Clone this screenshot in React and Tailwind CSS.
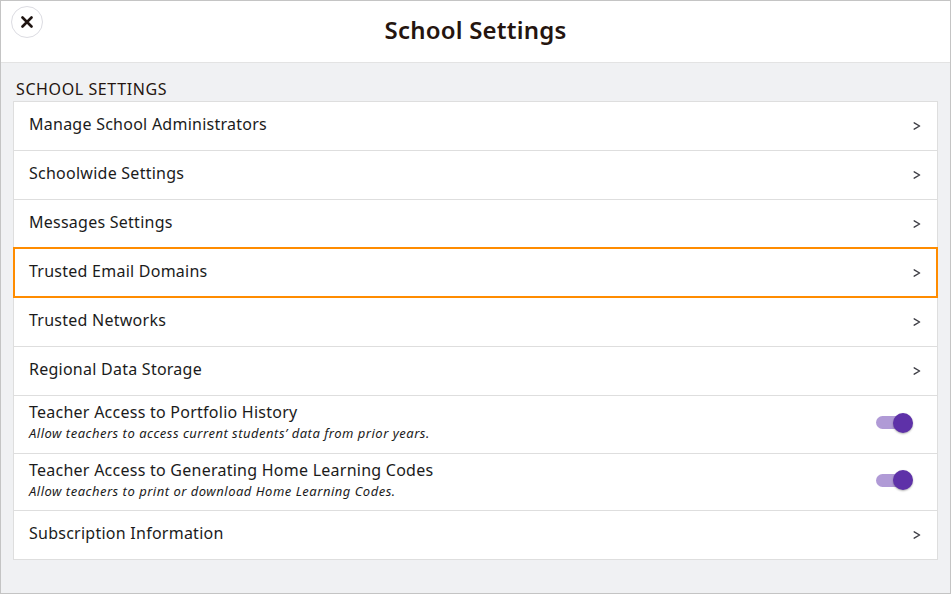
const rows = [
  { label: 'Manage School Administrators', h: 'h-[48px]' },
  { label: 'Schoolwide Settings' },
  { label: 'Messages Settings' },
  { label: 'Trusted Email Domains', active: true },
  { label: 'Trusted Networks' },
  { label: 'Regional Data Storage' },
  { label: 'Teacher Access to Portfolio History', sub: 'Allow teachers to access current students’ data from prior years.', toggle: true, h: 'h-[58px]' },
  { label: 'Teacher Access to Generating Home Learning Codes', sub: 'Allow teachers to print or download Home Learning Codes.', toggle: true, h: 'h-[57px]' },
  { label: 'Subscription Information' },
];

function Toggle() {
  return (
    <div className="relative w-[37px] h-[20px] mr-[8px] -mt-[4px] flex items-center">
      <div className="w-[31px] h-[13px] rounded-full bg-[#b09ad6]" />
      <div className="absolute right-0 w-[20px] h-[20px] rounded-full bg-[#5e31a8] shadow-[0_1px_2px_rgba(0,0,0,0.3)]" />
    </div>
  );
}

function Chevron() {
  return (
    <svg width="8" height="8" viewBox="0 0 8 8" className="text-[#3f3f46]">
      <path d="M1.2 0.8 L6.6 4 L1.2 7.2" fill="none" stroke="currentColor" strokeWidth="1.4" strokeLinecap="round" strokeLinejoin="round" />
    </svg>
  );
}

export default function App() {
  return (
    <div className="w-[951px] h-[594px] border border-[#c4c4c4] bg-[#f0f1f3] flex flex-col text-[#1b1b1b]" style={{ fontFamily: '"Noto Sans", "Open Sans", sans-serif' }}>
      <div className="relative h-[62px] bg-white border-b border-[#e3e3e3] flex items-center justify-center shrink-0">
        <button className="absolute left-[10px] top-[5px] w-[32px] h-[32px] rounded-full border border-[#dcdce2] bg-white flex items-center justify-center text-[#1f1512]">
          <svg width="12" height="12" viewBox="0 0 12 12">
            <path d="M1.5 1.5 L10.5 10.5 M10.5 1.5 L1.5 10.5" stroke="currentColor" strokeWidth="2.6" strokeLinecap="round" />
          </svg>
        </button>
        <h1 className="text-[24px] font-semibold text-[#25150f] tracking-[0.2px] -mt-[3px]">School Settings</h1>
      </div>

      <div className="px-[12px] pt-[15px]">
        <div className="pl-[3px] text-[16px] leading-[22px] text-[#25150f] tracking-[0.6px]">SCHOOL SETTINGS</div>
        <div className="bg-white border border-[#dedede] mt-[1px]">
          {rows.map((r, i) => (
            <div
              key={r.label}
              className={`flex items-center justify-between pl-[15px] pr-[16px] ${i > 0 ? 'border-t border-[#dedede]' : ''} ${r.h || 'h-[49px]'} ${r.active ? 'outline-2 outline-[#ff8c00] -outline-offset-1 relative' : ''}`}
            >
              <div className={`flex flex-col ${r.sub ? '-mt-[6px]' : '-mt-[5px]'}`}>
                <span className="text-[16px] leading-[20px] tracking-[0.25px]">{r.label}</span>
                {r.sub && <span className="text-[13px] leading-[16px] italic mt-[3px] tracking-[0.5px]">{r.sub}</span>}
              </div>
              {r.toggle ? <Toggle /> : <Chevron />}
            </div>
          ))}
        </div>
      </div>
    </div>
  );
}
